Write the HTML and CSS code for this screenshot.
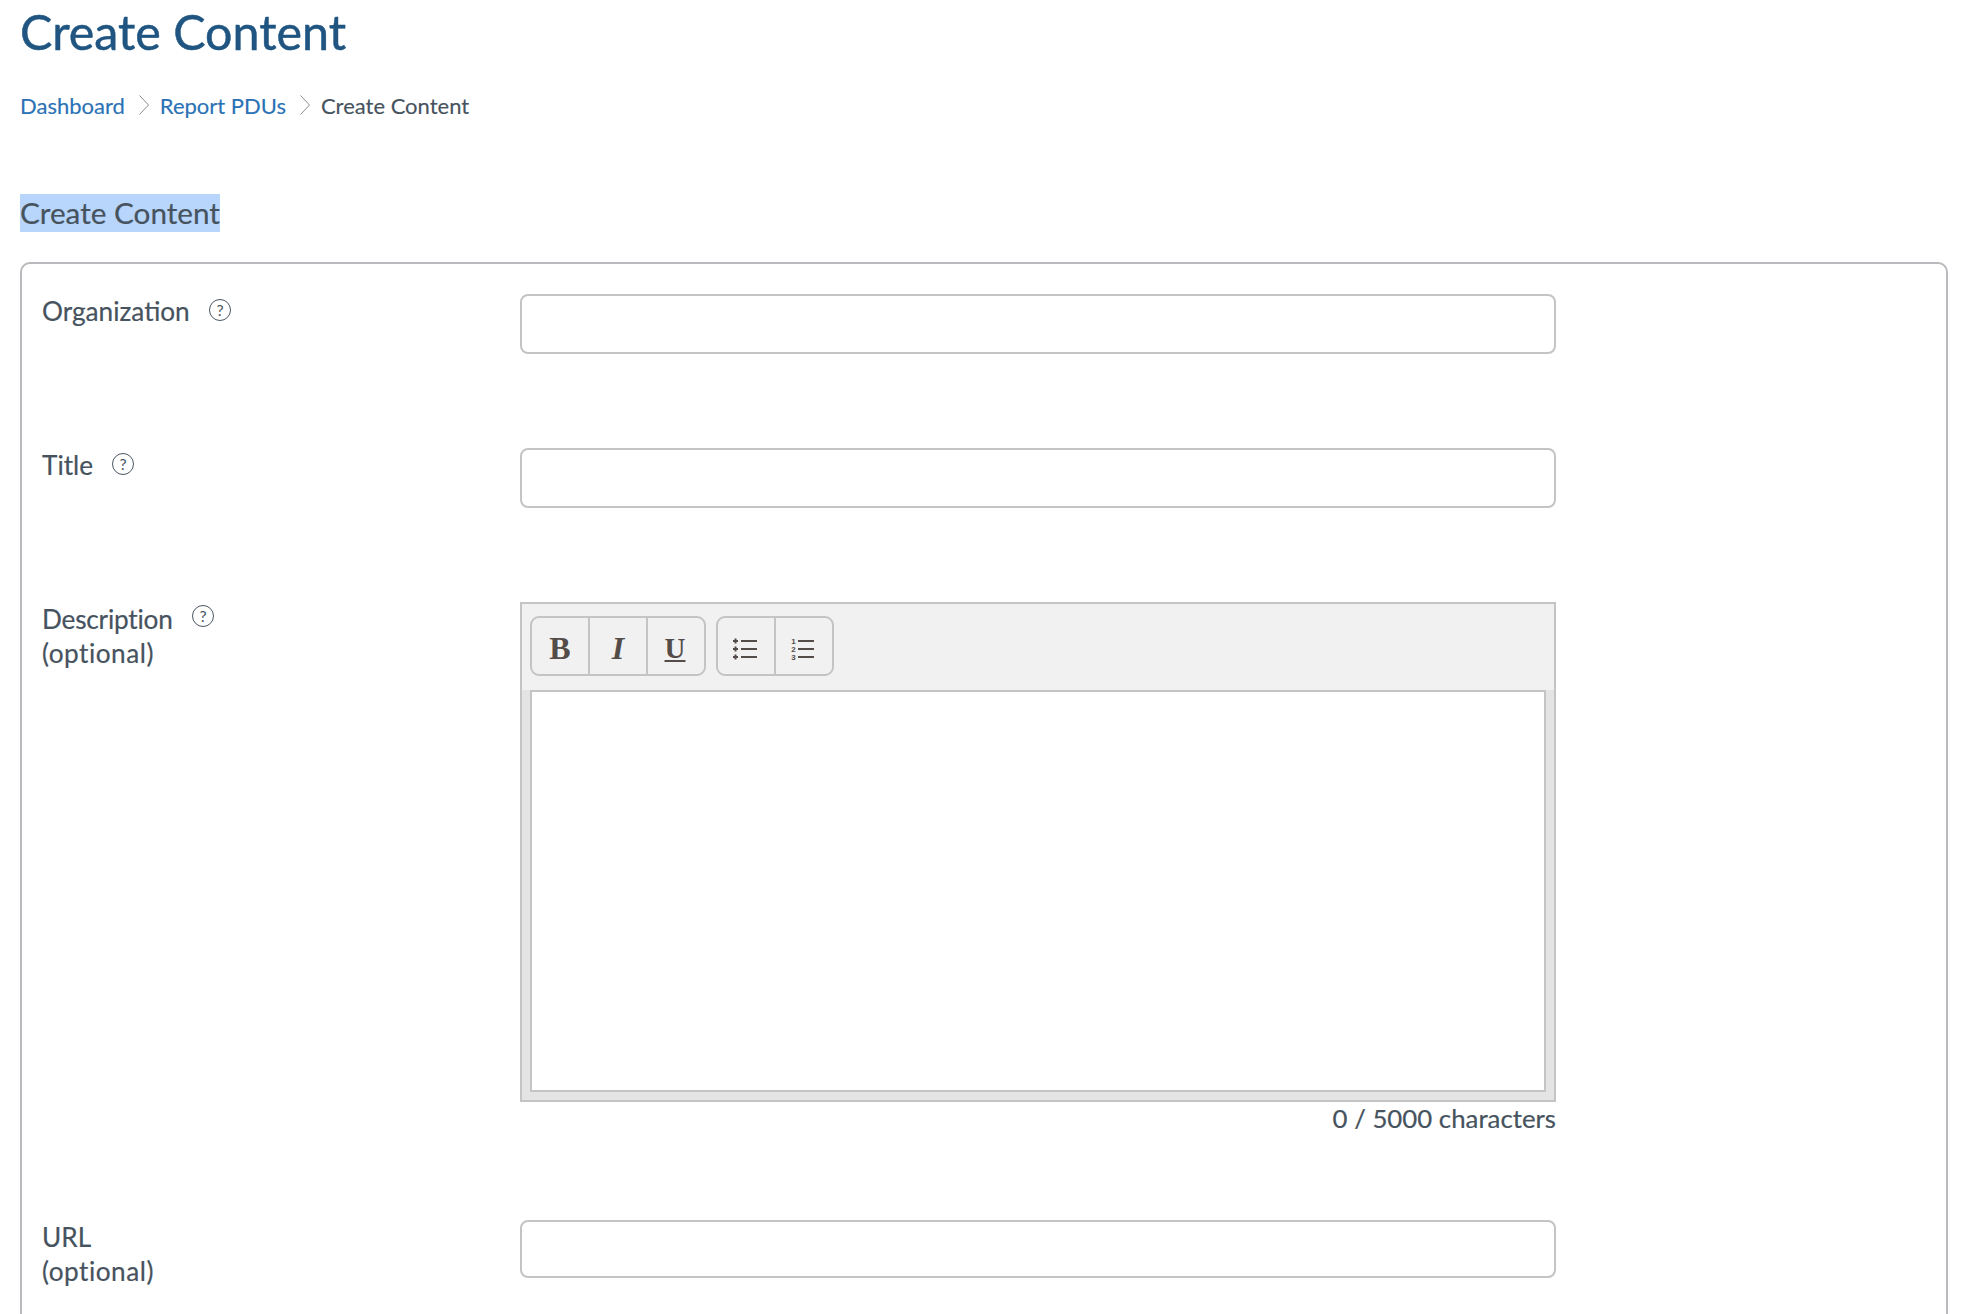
FILE: index.html
```html
<!DOCTYPE html>
<html lang="en">
<head>
<meta charset="utf-8">
<title>Create Content</title>
<link rel="stylesheet" href="styles.css">
</head>
<body>
<h1 class="page-title">Create Content</h1>
<nav class="crumbs">
  <a class="crumb-link" href="#">Dashboard</a>
  <svg class="crumb-sep" width="10" height="20" viewBox="0 0 10 20"><path d="M.5 .5l9 9.500-9 9.500" fill="none" stroke="#8a8d91" stroke-width="1"/></svg>
  <a class="crumb-link" href="#">Report PDUs</a>
  <svg class="crumb-sep" width="10" height="20" viewBox="0 0 10 20"><path d="M.5 .5l9 9.500-9 9.500" fill="none" stroke="#8a8d91" stroke-width="1"/></svg>
  <span class="crumb-current">Create Content</span>
</nav>
<h2 class="section-title"><span class="selected">Create Content</span></h2>
<form class="card">
  <div class="row row-org">
    <div class="label"><span class="label-line"><span>Organization</span><svg class="help" width="24" height="24" viewBox="0 0 24 24"><circle cx="12" cy="12" r="10.500" fill="none" stroke="#4a5661" stroke-width="1"/><text x="12" y="17.500" text-anchor="middle" class="help-q">?</text></svg></span></div>
    <div class="field"><input class="text-input" type="text"></div>
  </div>
  <div class="row row-title">
    <div class="label"><span class="label-line"><span>Title</span><svg class="help" width="24" height="24" viewBox="0 0 24 24"><circle cx="12" cy="12" r="10.500" fill="none" stroke="#4a5661" stroke-width="1"/><text x="12" y="17.500" text-anchor="middle" class="help-q">?</text></svg></span></div>
    <div class="field"><input class="text-input" type="text"></div>
  </div>
  <div class="row row-desc">
    <div class="label"><span class="label-line"><span class="tight">Description</span><svg class="help help-raised" width="24" height="24" viewBox="0 0 24 24"><circle cx="12" cy="12" r="10.500" fill="none" stroke="#4a5661" stroke-width="1"/><text x="12" y="17.500" text-anchor="middle" class="help-q">?</text></svg></span><br><span class="opt">(optional)</span></div>
    <div class="field">
      <div class="editor">
        <div class="toolbar">
          <div class="btn-group">
            <button type="button" class="tool tool-b">B</button>
            <button type="button" class="tool tool-i">I</button>
            <button type="button" class="tool tool-u">U</button>
          </div>
          <div class="btn-group">
            <button type="button" class="tool list-tool" aria-label="Bulleted list">
              <svg class="list-icon" width="24" height="24" viewBox="0 0 24 24"><g fill="none" stroke="#544c48" stroke-width="2"><path d="M8 4h16M8 12h16M8 20h16"/><path d="M0 4h5M2.500 1.500v5M0 12h5M2.500 9.500v5M0 20h5M2.500 17.500v5"/></g></svg>
            </button>
            <button type="button" class="tool list-tool" aria-label="Numbered list">
              <svg class="list-icon" width="24" height="24" viewBox="0 0 24 24"><g fill="none" stroke="#544c48" stroke-width="2"><path d="M7 4h16M7 12h16M7 20h16"/></g><text x="2.500" y="7" class="num">1</text><text x="2.500" y="15" class="num">2</text><text x="2.500" y="23" class="num">3</text></svg>
            </button>
          </div>
        </div>
        <div class="edit-area"></div>
      </div>
      <div class="counter">0 / 5000 characters</div>
    </div>
  </div>
  <div class="row row-url">
    <div class="label">URL<br><span class="opt">(optional)</span></div>
    <div class="field"><input class="text-input url-input" type="text"></div>
  </div>
</form>
</body>
</html>
```
FILE: styles.css
```css
* { box-sizing: border-box; }
html, body { margin: 0; height: 1314px; overflow: hidden; background: #fff; }
body { padding: 0 20px; font-family: "Lato", sans-serif; color: #46535e; }
.page-title { margin: 0; padding-top: 1px; font-size: 48.400px; line-height: 60px; font-weight: 400; color: #1f5580; -webkit-text-stroke: .5px #1f5580; }
.crumbs { display: flex; align-items: center; height: 30px; margin-top: 29px; font-size: 22px; -webkit-text-stroke: .15px currentColor; }
.crumb-link { color: #2a72b5; text-decoration: none; }
.crumb-sep { margin: 0 11px 0 14px; }
.crumb-current { color: #46535e; }
.section-title { margin: 74px 0 0; height: 38px; font-size: 29.700px; line-height: 38px; font-weight: 400; -webkit-text-stroke: .2px currentColor; }
.selected { display: inline-block; background: #b8d6fb; }
.card { margin-top: 30px; width: 1928px; height: 1100px; border: 2px solid #b9b9be; border-radius: 10px; padding: 30px 0 0 20px; }
.row { display: grid; grid-template-columns: 478px 1036px; font-size: 26.200px; line-height: 34px; -webkit-text-stroke: .2px currentColor; }
.row-org { height: 154px; }
.row-title { height: 154px; }
.row-desc { height: 618px; }
.label-line { display: inline-flex; align-items: center; gap: 18px; }
.tight { letter-spacing: -.2px; }
.opt { letter-spacing: .5px; }
.help { flex: none; position: relative; top: -1px; -webkit-text-stroke: 0; }
.help-raised { top: -3px; }
.help-q { font-family: "Lato", sans-serif; font-size: 16px; fill: #4a5661; }
.text-input { display: block; width: 100%; height: 60px; border: 2px solid #c4c4c4; border-radius: 8px; background: #fff; }
.url-input { height: 58px; }
.editor { height: 500px; border: 2px solid #c4c4c4; background: #e4e4e4; padding: 0 8px 8px; display: flex; flex-direction: column; }
.toolbar { display: flex; gap: 10px; margin: 0 -8px; padding: 12px 8px; height: 86px; background: #f1f1f1; }
.btn-group { display: flex; height: 60px; border: 2px solid #c4c4c4; border-radius: 9px; }
.tool { display: flex; align-items: center; justify-content: center; width: 58px; padding: 4px 0 0; border: 0; border-left: 2px solid #c4c4c4; background: transparent; color: #544c48; font-family: "Liberation Serif", serif; font-size: 32px; line-height: 1; font-weight: 700; -webkit-text-stroke: 0; }
.tool:first-child { width: 56px; border-left: 0; }
.tool-i { font-style: italic; }
.tool-u { text-decoration: underline; font-size: 29px; font-weight: 700; padding-right: 2px; }
.list-tool { padding: 6px 3px 0 0; }
.list-icon { overflow: visible; }
.num { font-family: "Liberation Sans", sans-serif; font-size: 8px; font-weight: 700; fill: #544c48; text-anchor: middle; }
.edit-area { flex: 1; background: #fff; border: 2px solid #c4c4c4; }
.counter { text-align: right; font-size: 25.800px; line-height: 33px; }
```
